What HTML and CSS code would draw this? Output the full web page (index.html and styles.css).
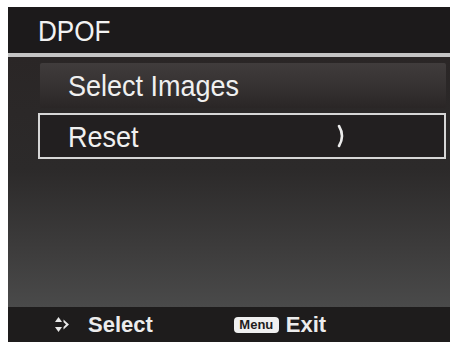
FILE: index.html
```
<!DOCTYPE html>
<html>
<head>
<meta charset="utf-8">
<link rel="stylesheet" href="styles.css">
</head>
<body>
<div class="screen">
  <div class="header"><span class="title">DPOF</span></div>
  <div class="content">
    <div class="item item-plain"><span class="label">Select Images</span></div>
    <div class="item item-selected"><span class="label">Reset</span>
      <svg class="chev" width="10" height="24" viewBox="0 0 10 24">
        <path d="M3,2 Q9,12 3,22" fill="none" stroke="#ececec" stroke-width="2.6" stroke-linecap="round"/>
      </svg>
    </div>
  </div>
  <div class="footer">
    <div class="hint hint-select">
      <svg class="nav-icon" width="15" height="19" viewBox="0 0 15 19">
        <polygon points="0,7 3.5,2 7,7" fill="#e8e8e8"/>
        <polygon points="0,12 3.5,17 7,12" fill="#e8e8e8"/>
        <polygon points="8.5,4.5 14,9.5 8.5,14.5 8.5,12 11,9.5 8.5,7" fill="#e8e8e8"/>
      </svg>
      <span class="hint-text">Select</span>
    </div>
    <div class="hint hint-exit">
      <span class="badge">Menu</span>
      <span class="hint-text">Exit</span>
    </div>
  </div>
</div>
</body>
</html>
```
FILE: styles.css
```
html, body {
  margin: 0;
  background: #ffffff;
}
body {
  padding: 7px 4px 4px 8px;
  font-family: "Liberation Sans", Arial, sans-serif;
}
.screen {
  width: 442px;
  height: 335px;
  display: flex;
  flex-direction: column;
  background: #2b2828;
}
.header {
  background: #1c1a1b;
  border-bottom: 4px solid #c4c4c4;
  display: flex;
  align-items: center;
  padding-left: 30px;
  box-sizing: border-box;
  height: 50px;
}
.title {
  color: #f2f2f2;
  font-size: 29px;
  line-height: 1;
  margin-top: 2px;
  transform: scaleX(0.9);
  transform-origin: left center;
  display: inline-block;
}
.content {
  flex: 1;
  background: linear-gradient(to bottom, #2a2626 0%, #2c2a2a 45%, #3c3b3b 75%, #4a4a4a 100%);
  padding: 6px 4px 0 30px;
  display: flex;
  flex-direction: column;
  gap: 5px;
}
.item {
  display: flex;
  align-items: center;
  box-sizing: border-box;
  color: #f0f0f0;
  font-size: 30px;
}
.item-plain {
  height: 45px;
  margin-left: 2px;
  padding-left: 28px;
  background: linear-gradient(to bottom, #403c3c 0%, #363232 50%, #2a2626 100%);
  border-radius: 2px;
}
.item-selected {
  height: 46px;
  padding-left: 28px;
  border: 2px solid #d6d6d6;
  background: #221f20;
}
.label {
  line-height: 1;
  display: inline-block;
  transform: scaleX(0.9);
  transform-origin: left center;
  margin-top: 1px;
}
.chev {
  display: block;
  margin-left: 190px;
}
.footer {
  height: 35px;
  background: #1e1c1c;
  display: flex;
  align-items: center;
}
.hint {
  display: flex;
  align-items: center;
}
.hint-select {
  margin-left: 47px;
}
.nav-icon {
  display: block;
  margin-right: 18px;
}
.hint-text {
  color: #ececec;
  font-weight: bold;
  font-size: 22px;
  line-height: 1;
}
.hint-exit {
  margin-left: 81px;
}
.badge {
  background: #f0f0f0;
  color: #1e1c1c;
  font-weight: bold;
  font-size: 13px;
  line-height: 16px;
  height: 16px;
  width: 45px;
  text-align: center;
  border-radius: 4px;
  margin-right: 7px;
}
```
